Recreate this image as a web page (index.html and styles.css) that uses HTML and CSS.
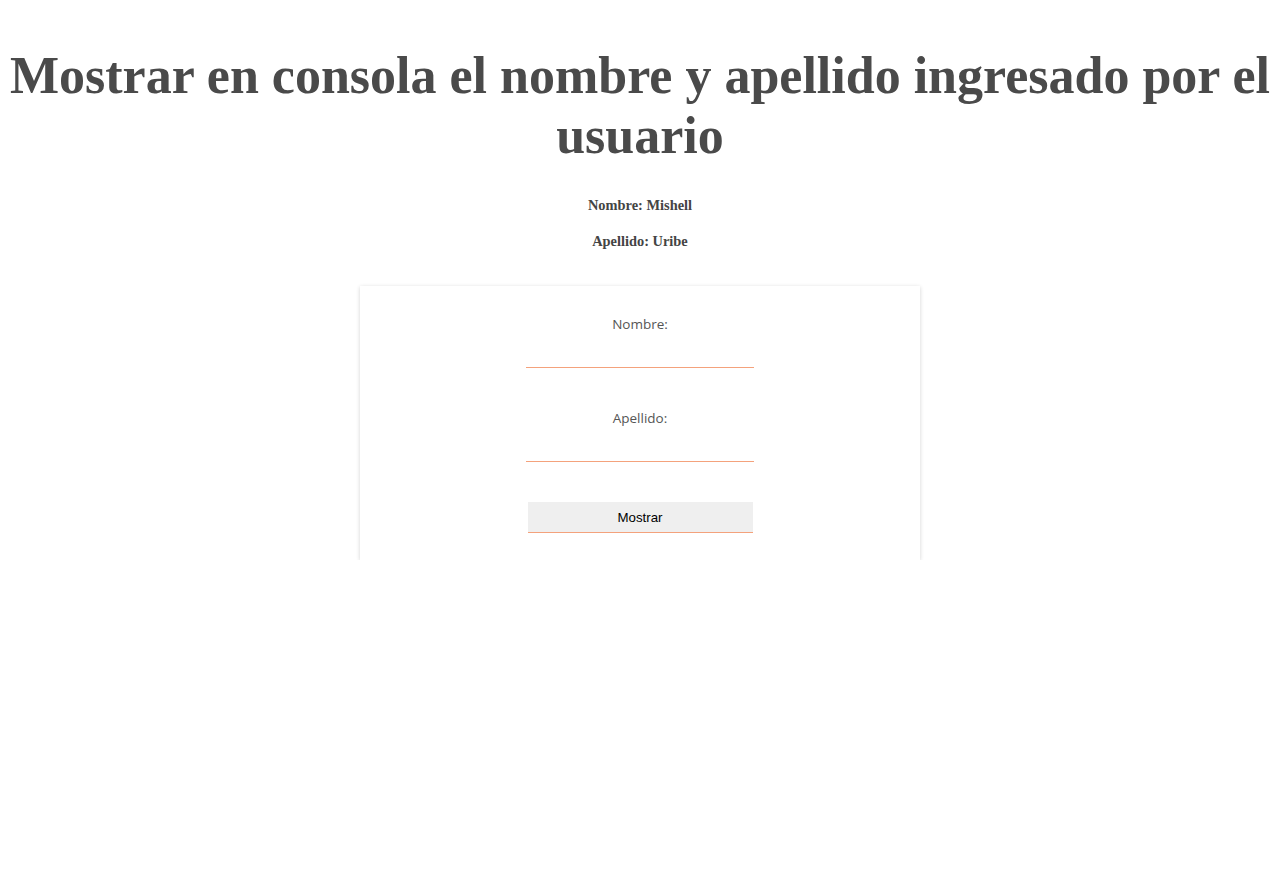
FILE: index.html
```html
<!DOCTYPE html>
<html lang="es">
<head>
<meta charset="utf-8">
<title>Mostrar nombre y apellido</title>
<link rel="stylesheet" href="styles.css">
</head>
<body>
  <h1 class="title">Mostrar en consola el nombre y apellido ingresado por el usuario</h1>
  <p class="result result-first">Nombre: Mishell</p>
  <p class="result result-second">Apellido: Uribe</p>
  <form class="card">
    <label class="field-label" for="nombre">Nombre:</label>
    <input class="field-input" id="nombre" type="text">
    <label class="field-label field-label-next" for="apellido">Apellido:</label>
    <input class="field-input" id="apellido" type="text">
    <button class="btn" type="button">Mostrar</button>
  </form>
</body>
</html>
```

FILE: styles.css
```css
html, body {
  background: #ffffff;
}
body {
  margin: 0 8px;
  padding: 1px 0 0;
  font-family: "Liberation Serif", "Times New Roman", serif;
  color: #4a4a4a;
}
.title {
  margin: 45px 0 0;
  font-size: 52px;
  line-height: 60px;
  font-weight: bold;
  text-align: center;
  color: #4a4a4a;
}
.result {
  margin: 0;
  font-size: 14.4px;
  line-height: 17px;
  font-weight: bold;
  text-align: center;
  color: #444444;
}
.result-first {
  margin-top: 31px;
}
.result-second {
  margin-top: 19px;
}
.card {
  box-sizing: border-box;
  width: 560px;
  margin: 36px auto 0;
  padding: 28px 0 27px;
  background: #ffffff;
  box-shadow: 0 1px 4px rgba(0, 0, 0, 0.18);
  display: flex;
  flex-direction: column;
  align-items: center;
}
.field-label {
  display: block;
  font-family: "Open Sans", "Noto Sans", sans-serif;
  font-size: 13.5px;
  line-height: 20px;
  color: #555555;
}
.field-label-next {
  margin-top: 40px;
}
.field-input {
  box-sizing: border-box;
  display: block;
  width: 228px;
  height: 26px;
  margin-top: 8px;
  padding: 0 4px;
  border: none;
  border-bottom: 1px solid #f4a27c;
  background: transparent;
  outline: none;
  font-family: "Open Sans", sans-serif;
  font-size: 14px;
}
.btn {
  box-sizing: border-box;
  display: block;
  width: 225px;
  height: 31px;
  margin-top: 40px;
  padding: 0;
  border: none;
  border-bottom: 1px solid #f4a27c;
  background: #efefef;
  font-family: "Liberation Sans", Arial, sans-serif;
  font-size: 13.3px;
  color: #000000;
}
```
